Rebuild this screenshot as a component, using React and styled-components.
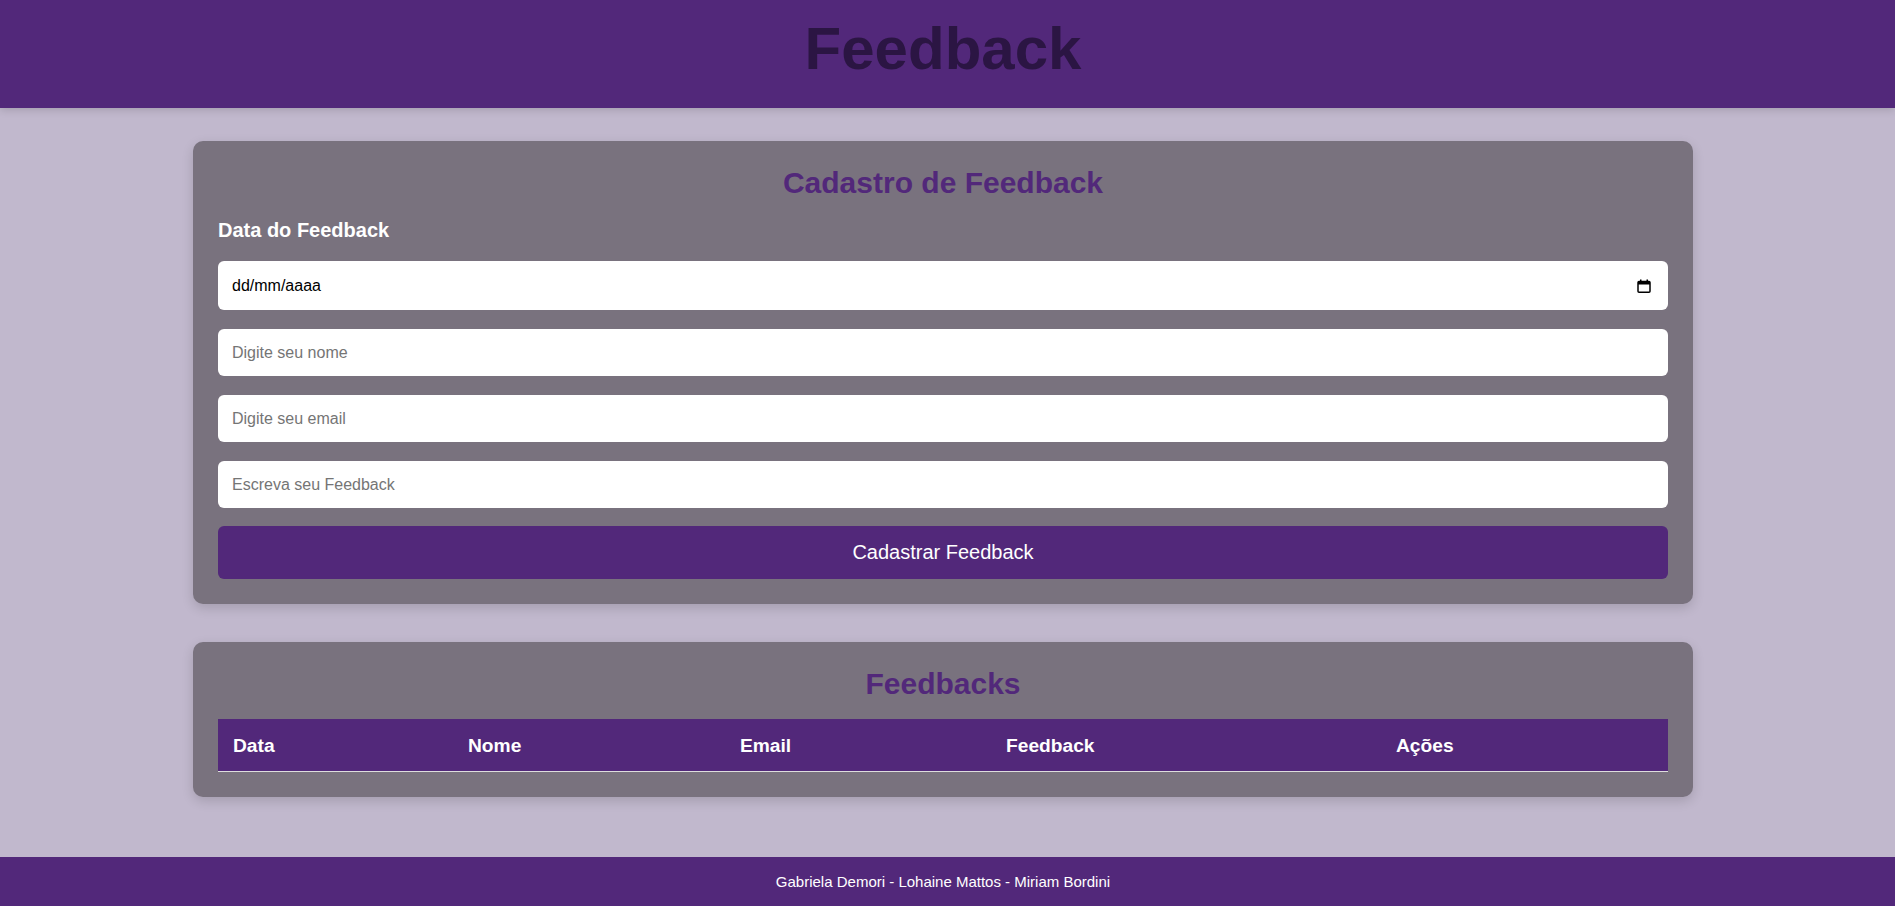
import styled, { createGlobalStyle } from 'styled-components';

const GlobalStyle = createGlobalStyle`
  * {
    box-sizing: border-box;
  }
  body {
    margin: 0;
    font-family: "Liberation Sans", Arial, sans-serif;
    background-color: #c1b8cd;
  }
`

const columns = [
  { label: 'Data', width: 235 },
  { label: 'Nome', width: 272 },
  { label: 'Email', width: 266 },
  { label: 'Feedback', width: 390 },
  { label: 'Ações', width: 287 },
]

function CalendarIcon() {
  return (
    <svg width="14" height="14" viewBox="0 0 14 14" fill="none">
      <rect x="1" y="2.5" width="12" height="10.75" rx="1" stroke="#000" strokeWidth="1.5" />
      <rect x="1" y="2.5" width="12" height="3" fill="#000" />
      <rect x="3" y="0.5" width="1.5" height="2.5" fill="#000" />
      <rect x="9.5" y="0.5" width="1.5" height="2.5" fill="#000" />
    </svg>
  )
}

function App() {
  return (
    <Page>
      <GlobalStyle />
      <Header>
        <Title>Feedback</Title>
      </Header>

      <Main>
        <Card>
          <CardTitle>Cadastro de Feedback</CardTitle>
          <Form onSubmit={(e) => e.preventDefault()}>
            <Label>Data do Feedback</Label>
            <DateField>
              <DateInput type="text" placeholder="dd/mm/aaaa" />
              <CalendarIcon />
            </DateField>
            <Input type="text" placeholder="Digite seu nome" />
            <Input type="email" placeholder="Digite seu email" />
            <Input type="text" placeholder="Escreva seu Feedback" />
            <Button type="submit">Cadastrar Feedback</Button>
          </Form>
        </Card>

        <Card>
          <CardTitle $tight>Feedbacks</CardTitle>
          <Table>
            <thead>
              <tr>
                {columns.map((col) => (
                  <Th key={col.label} width={col.width}>{col.label}</Th>
                ))}
              </tr>
            </thead>
            <tbody></tbody>
          </Table>
        </Card>
      </Main>

      <Footer>Gabriela Demori - Lohaine Mattos - Miriam Bordini</Footer>
    </Page>
  )
}

export default App;

const Page = styled.div`
  display: flex;
  flex-direction: column;
  min-height: 100vh;
`

const Header = styled.header`
  background-color: #52287a;
  padding: 14px 9px 25px 0;
  text-align: center;
  box-shadow: 0 2px 8px rgba(0, 0, 0, 0.15);
  position: relative;
  z-index: 1;
`

const Title = styled.h1`
  margin: 0;
  font-size: 60px;
  font-weight: bold;
  color: #2b1543;
`

const Main = styled.main`
  flex: 1;
  display: flex;
  flex-direction: column;
  align-items: center;
  gap: 38px;
  padding: 33px 9px 40px 0;
`

const Card = styled.section`
  width: 1500px;
  background-color: #79727e;
  border-radius: 10px;
  padding: 25px;
  box-shadow: 0 4px 12px rgba(0, 0, 0, 0.15);
`

const CardTitle = styled.h2`
  margin: 0 0 ${({ $tight }) => ($tight ? 18 : 19)}px;
  font-size: 30px;
  font-weight: bold;
  text-align: center;
  color: #52287a;
`

const Form = styled.form`
  display: flex;
  flex-direction: column;
  gap: 19px;
`

const Label = styled.label`
  font-size: 20px;
  font-weight: bold;
  color: #fff;
`

const Input = styled.input`
  width: 100%;
  height: 47px;
  padding: 0 14px;
  border: none;
  border-radius: 6px;
  background-color: #fff;
  font-family: "Liberation Sans", Arial, sans-serif;
  font-size: 16px;
  color: #000;
  outline: none;

  &::placeholder {
    color: #757575;
  }
`

const DateField = styled.div`
  display: flex;
  align-items: center;
  height: 49px;
  padding: 0 17px 0 14px;
  border-radius: 6px;
  background-color: #fff;
`

const DateInput = styled.input`
  flex: 1;
  padding: 0;
  border: none;
  background: transparent;
  font-family: "Liberation Sans", Arial, sans-serif;
  font-size: 16px;
  color: #000;
  outline: none;

  &::placeholder {
    color: #000;
  }
`

const Button = styled.button`
  margin-top: -1px;
  padding: 15px;
  border: none;
  border-radius: 6px;
  background-color: #52287a;
  color: #fff;
  font-family: "Liberation Sans", Arial, sans-serif;
  font-size: 20px;
  line-height: 23px;
  cursor: pointer;
`

const Table = styled.table`
  width: 100%;
  border-collapse: collapse;
  table-layout: fixed;
`

const Th = styled.th`
  width: ${({ width }) => width}px;
  padding: 16px 15px 14px;
  background-color: #52287a;
  color: #fff;
  font-size: 19.2px;
  font-weight: bold;
  text-align: left;
  border-bottom: 1px solid #ddd;
`

const Footer = styled.footer`
  background-color: #52287a;
  color: #fff;
  text-align: center;
  font-size: 15px;
  padding: 16px 9px 16px 0;
`
